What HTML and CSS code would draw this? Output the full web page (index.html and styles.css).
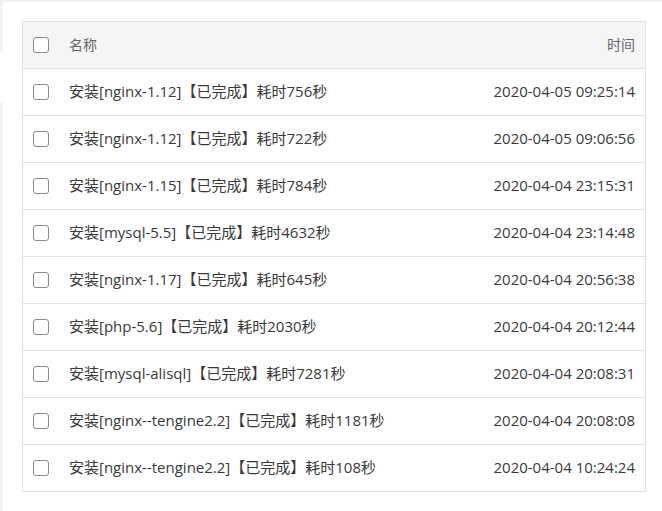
FILE: index.html
```html
<!DOCTYPE html>
<html>
<head>
<meta charset="utf-8">
<link rel="stylesheet" href="styles.css">
</head>
<body>
<div class="page">
  <div class="edge">
    <div class="edge-a"></div>
    <div class="edge-b"></div>
    <div class="edge-c"></div>
  </div>
  <div class="panel">
    <table class="tbl">
      <thead>
        <tr><th class="c-check"><span class="cb"></span></th><th class="c-name">名称</th><th class="c-time">时间</th></tr>
      </thead>
      <tbody>
        <tr><td class="c-check"><span class="cb"></span></td><td class="c-name">安装[nginx-1.12]【已完成】耗时756秒</td><td class="c-time">2020-04-05 09:25:14</td></tr>
        <tr><td class="c-check"><span class="cb"></span></td><td class="c-name">安装[nginx-1.12]【已完成】耗时722秒</td><td class="c-time">2020-04-05 09:06:56</td></tr>
        <tr><td class="c-check"><span class="cb"></span></td><td class="c-name">安装[nginx-1.15]【已完成】耗时784秒</td><td class="c-time">2020-04-04 23:15:31</td></tr>
        <tr><td class="c-check"><span class="cb"></span></td><td class="c-name">安装[mysql-5.5]【已完成】耗时4632秒</td><td class="c-time">2020-04-04 23:14:48</td></tr>
        <tr><td class="c-check"><span class="cb"></span></td><td class="c-name">安装[nginx-1.17]【已完成】耗时645秒</td><td class="c-time">2020-04-04 20:56:38</td></tr>
        <tr><td class="c-check"><span class="cb"></span></td><td class="c-name">安装[php-5.6]【已完成】耗时2030秒</td><td class="c-time">2020-04-04 20:12:44</td></tr>
        <tr><td class="c-check"><span class="cb"></span></td><td class="c-name">安装[mysql-alisql]【已完成】耗时7281秒</td><td class="c-time">2020-04-04 20:08:31</td></tr>
        <tr><td class="c-check"><span class="cb"></span></td><td class="c-name">安装[nginx--tengine2.2]【已完成】耗时1181秒</td><td class="c-time">2020-04-04 20:08:08</td></tr>
        <tr><td class="c-check"><span class="cb"></span></td><td class="c-name">安装[nginx--tengine2.2]【已完成】耗时108秒</td><td class="c-time">2020-04-04 10:24:24</td></tr>
      </tbody>
    </table>
  </div>
</div>
</body>
</html>
```
FILE: styles.css
```css
html, body {
  margin: 0;
  padding: 0;
  background: #f2f2f2;
  overflow: hidden;
}
body {
  font-family: "Open Sans", "Noto Sans CJK SC", sans-serif;
  font-size: 15px;
  color: #3a3a3a;
}
.page {
  display: flex;
  width: 662px;
  height: 511px;
  padding-top: 2px;
  box-sizing: border-box;
  overflow: hidden;
}
.edge {
  width: 3px;
  display: flex;
  flex-direction: column;
  flex: none;
}
.edge-a { height: 50px; background: #f2f2f2; }
.edge-b { height: 50px; background: #ffffff; }
.edge-c { flex: 1; background: #f2f2f2; }
.panel {
  width: 659px;
  flex: none;
  box-sizing: border-box;
  background: #fff;
  padding: 19px 0 0 19px;
}
.tbl {
  width: 624px;
  table-layout: fixed;
  border-collapse: collapse;
  border: 1px solid #e2e2e2;
}
.tbl th, .tbl td {
  height: 46px;
  padding: 0;
  border-bottom: 1px solid #e2e2e2;
  vertical-align: middle;
  font-weight: normal;
  white-space: nowrap;
  line-height: 20px;
}
.tbl tbody .c-name,
.tbl tbody .c-time {
  height: 44px;
  padding-bottom: 2px;
}
.tbl thead th {
  background: #f5f5f5;
  color: #666;
  font-size: 14px;
}
.c-check {
  width: 36px;
  padding-left: 10px !important;
  text-align: left;
}
.c-name {
  text-align: left;
}
.c-time {
  width: 200px;
  text-align: right;
  padding-right: 10px !important;
}
.cb {
  display: block;
  width: 16px;
  height: 16px;
  box-sizing: border-box;
  border: 1px solid #8a8a8a;
  border-radius: 3px;
  background: #fff;
}
```
